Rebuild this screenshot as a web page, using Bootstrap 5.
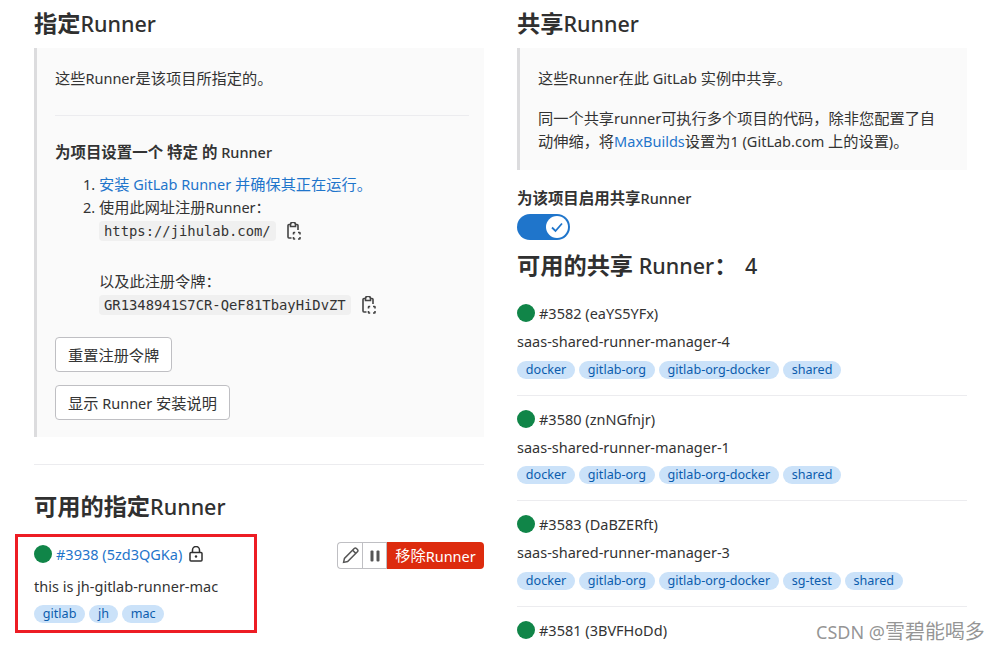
<!DOCTYPE html>
<html lang="zh">
<head>
<meta charset="utf-8">
<title>Runner</title>
<link rel="stylesheet" href="https://cdn.jsdelivr.net/npm/bootstrap@5.3.0/dist/css/bootstrap.min.css">
<style>
html,body{height:650px;overflow:hidden;background:#fff}
body{font-family:"Noto Sans","Noto Sans CJK SC",sans-serif;font-size:14.5px;line-height:20px;color:#333;position:relative}
.zh{font-size:1.05em;line-height:1}
.page-wrap{display:flex;gap:33px;padding:0 35px 0 34px}
.side{width:450px;flex:none}
.ttl{font-size:21.5px;line-height:28px;font-weight:500;margin:10px 0 10px;color:#303030}
.ttl .zh{font-weight:700;font-size:1.08em}
.ttl2{margin:0 0 23px}
.count{margin-left:2px}
.panel{background:#fafafa;border-left:3px solid #dcdcde;padding:20px 15px 17px 18px}
.panel p{margin:0}
.panel p.wrapped{margin:19px 8px 0 0;line-height:23px}
.rule{border-top:1px solid #ececef;margin:27px 0 26px}
.strong-line{font-weight:500}
.strong-line .zh{font-weight:700;font-size:1.065em}
.steps{padding-left:44px;list-style:decimal;margin:11px 0 0}
.steps li{line-height:23px}
a.lnk{color:#1f75cb;text-decoration:none}
.codebox{font-family:"DejaVu Sans Mono","Liberation Mono",monospace;font-size:13.85px;line-height:20px;background:#f0f0f0;border-radius:4px;padding:0 5px;color:#333;display:inline-block}
.cp-row{display:flex;align-items:center;gap:11px;height:23px}
.spacer{height:28px}
.btn-plain{background:#fff;border:1px solid #bfbfc3;border-radius:4px;color:#333;line-height:20px;padding:6.5px 12px;display:block;width:max-content}
.btn-first{margin-top:21px}
.btn-next{margin-top:13px}
.sep{border-top:1px solid #ececef;margin:27px 0 28px}
.dot{width:18px;height:18px;border-radius:50%;background:#108548;flex:none;display:inline-block}
.rhead{display:flex;align-items:center;gap:4px;height:20px}
.lock-ico{margin-left:3px}
.tag-row{display:flex;gap:4px;margin-top:9.5px}
.tag-row.tight{margin-top:8.5px}
.pill{background:#cbe2f9;color:#0b5cad;font-size:12.6px;line-height:16px;padding:1px 8.8px;border-radius:9px}
.rn{margin-top:8px}
.rn.own{margin-top:12px}
.share-item{padding:0 0 16px;border-bottom:1px solid #ececef;margin-bottom:13px}
.lbl{font-weight:500;margin:18px 0 0;line-height:20px}
.lbl .zh{font-weight:700;font-size:1.065em}
.tog{width:53px;height:26px;border-radius:13px;background:#1f75cb;margin-top:6px;position:relative;display:block}
.tog span{position:absolute;right:2px;top:2px;width:22px;height:22px;border-radius:50%;background:#fff;display:flex;align-items:center;justify-content:center}
.ttl3{margin:12px 0 23px}
.bgroup{display:flex;height:27px;margin-top:-2px}
.bgroup>div{display:flex;align-items:center;justify-content:center;border:1px solid #bfbfc3;background:#fff;width:25px}
.bgroup>div:first-child{border-radius:4px 0 0 4px;border-right:0}
.bgroup>.del{background:#dd2b0e;border:0;color:#fff;width:97px;border-radius:0 4px 4px 0}
.mark-box{position:absolute;left:15px;top:534px;width:242px;height:99px;border:3px solid #ed1c24;pointer-events:none}
.wmark{position:absolute;left:816px;top:619px;font-size:18px;line-height:26px;color:rgba(130,130,130,.85);white-space:nowrap}
.wmark .zh{font-size:1.11em}
</style>
</head>
<body>
<div class="page-wrap">
  <div class="side">
    <h3 class="ttl"><span class="zh">指定</span>Runner</h3>
    <div class="panel">
      <p><span class="zh">这些</span>Runner<span class="zh">是该项目所指定的。</span></p>
      <div class="rule"></div>
      <p class="strong-line"><span class="zh">为项目设置一个 特定 的</span> Runner</p>
      <ol class="steps">
        <li><a class="lnk" href="#"><span class="zh">安装</span> GitLab Runner <span class="zh">并确保其正在运行。</span></a></li>
        <li><span class="zh">使用此网址注册</span>Runner：
          <div class="cp-row"><code class="codebox">https://jihulab.com/</code>
            <svg width="14" height="18" viewBox="0 0 14 18" fill="none" stroke="#444" stroke-width="1.6"><path d="M3.500 2.500H2a1 1 0 0 0-1 1V15a1 1 0 0 0 1 1h2.500M8.500 2.500H10a1 1 0 0 1 1 1v4.500M3.500 4.500h5V2.700a2.500 2.500 0 0 0-5 0z"/><path d="M6.500 12.500v-1.500a.5.5 0 0 1 .5-.5h1.200M11 10.500h1.500a.5.5 0 0 1 .5.5v1.500M13 15v1.500a.5.500 0 0 1-.5.500H11M8.200 17H7a.5.500 0 0 1-.5-.5V15"/></svg></div>
          <div class="spacer"></div>
          <div><span class="zh">以及此注册令牌：</span></div>
          <div class="cp-row"><code class="codebox">GR1348941S7CR-QeF81TbayHiDvZT</code>
            <svg width="14" height="18" viewBox="0 0 14 18" fill="none" stroke="#444" stroke-width="1.6"><path d="M3.500 2.500H2a1 1 0 0 0-1 1V15a1 1 0 0 0 1 1h2.500M8.500 2.500H10a1 1 0 0 1 1 1v4.500M3.500 4.500h5V2.700a2.500 2.500 0 0 0-5 0z"/><path d="M6.500 12.500v-1.500a.5.5 0 0 1 .5-.5h1.200M11 10.500h1.500a.5.5 0 0 1 .5.5v1.500M13 15v1.500a.5.500 0 0 1-.5.500H11M8.200 17H7a.5.500 0 0 1-.5-.5V15"/></svg></div>
        </li>
      </ol>
      <div class="btn-plain btn-first"><span class="zh">重置注册令牌</span></div>
      <div class="btn-plain btn-next"><span class="zh">显示</span> Runner <span class="zh">安装说明</span></div>
    </div>
    <div class="sep"></div>
    <h3 class="ttl ttl2"><span class="zh">可用的指定</span>Runner</h3>
    <div class="d-flex justify-content-between align-items-start">
      <div>
        <div class="rhead"><span class="dot"></span><a class="lnk" href="#">#3938 (5zd3QGKa)</a>
          <svg class="lock-ico" width="14" height="16" viewBox="0 0 14 16" fill="none" stroke="#303030" stroke-width="1.500"><rect x="1" y="6.500" width="12" height="8.500" rx="1"/><path d="M3.500 6.500V4a3.500 3.500 0 0 1 7 0v2.500"/><circle cx="7" cy="10.500" r="1.200" fill="#303030" stroke="none"/></svg></div>
        <div class="rn own">this is jh-gitlab-runner-mac</div>
        <div class="tag-row tight"><span class="pill">gitlab</span><span class="pill">jh</span><span class="pill">mac</span></div>
      </div>
      <div class="bgroup">
        <div><svg width="17" height="17" viewBox="0 0 16 16" fill="none" stroke="#555" stroke-width="1.400"><path d="M1.500 14.500l.8-3.800L11.500 1.500a1.500 1.500 0 0 1 2.100 0l.9.9a1.500 1.500 0 0 1 0 2.100L5.300 13.700z"/><path d="M10 3l3 3"/></svg></div>
        <div><svg width="10" height="12" viewBox="0 0 10 12" fill="#555"><rect x="0.500" y="0.500" width="3" height="11" rx="1"/><rect x="6.500" y="0.500" width="3" height="11" rx="1"/></svg></div>
        <div class="del"><span class="zh">移除</span>Runner</div>
      </div>
    </div>
  </div>
  <div class="side">
    <h3 class="ttl"><span class="zh">共享</span>Runner</h3>
    <div class="panel">
      <p><span class="zh">这些</span>Runner<span class="zh">在此</span> GitLab <span class="zh">实例中共享。</span></p>
      <p class="wrapped"><span class="zh">同一个共享</span>runner<span class="zh">可执行多个项目的代码，除非您配置了自动伸缩，将</span><a class="lnk" href="#">MaxBuilds</a><span class="zh">设置为</span>1 (GitLab.com <span class="zh">上的设置</span>)<span class="zh">。</span></p>
    </div>
    <div class="lbl"><span class="zh">为该项目启用共享</span>Runner</div>
    <span class="tog"><span><svg width="14" height="12" viewBox="0 0 14 12" fill="none" stroke="#1f75cb" stroke-width="1.800"><path d="M2 6.500l3.500 3.500L12 2.500"/></svg></span></span>
    <h3 class="ttl ttl3"><span class="zh">可用的共享</span> Runner<span class="zh">：</span> <span class="count">4</span></h3>
    <div class="share-item">
      <div class="rhead"><span class="dot"></span>#3582 (eaYS5YFx)</div>
      <div class="rn">saas-shared-runner-manager-4</div>
      <div class="tag-row"><span class="pill">docker</span><span class="pill">gitlab-org</span><span class="pill">gitlab-org-docker</span><span class="pill">shared</span></div>
    </div>
    <div class="share-item">
      <div class="rhead"><span class="dot"></span>#3580 (znNGfnjr)</div>
      <div class="rn">saas-shared-runner-manager-1</div>
      <div class="tag-row"><span class="pill">docker</span><span class="pill">gitlab-org</span><span class="pill">gitlab-org-docker</span><span class="pill">shared</span></div>
    </div>
    <div class="share-item">
      <div class="rhead"><span class="dot"></span>#3583 (DaBZERft)</div>
      <div class="rn">saas-shared-runner-manager-3</div>
      <div class="tag-row"><span class="pill">docker</span><span class="pill">gitlab-org</span><span class="pill">gitlab-org-docker</span><span class="pill">sg-test</span><span class="pill">shared</span></div>
    </div>
    <div class="share-item">
      <div class="rhead"><span class="dot"></span>#3581 (3BVFHoDd)</div>
    </div>
  </div>
</div>
<div class="mark-box"></div>
<div class="wmark">CSDN @<span class="zh">雪碧能喝多</span></div>
</body>
</html>
